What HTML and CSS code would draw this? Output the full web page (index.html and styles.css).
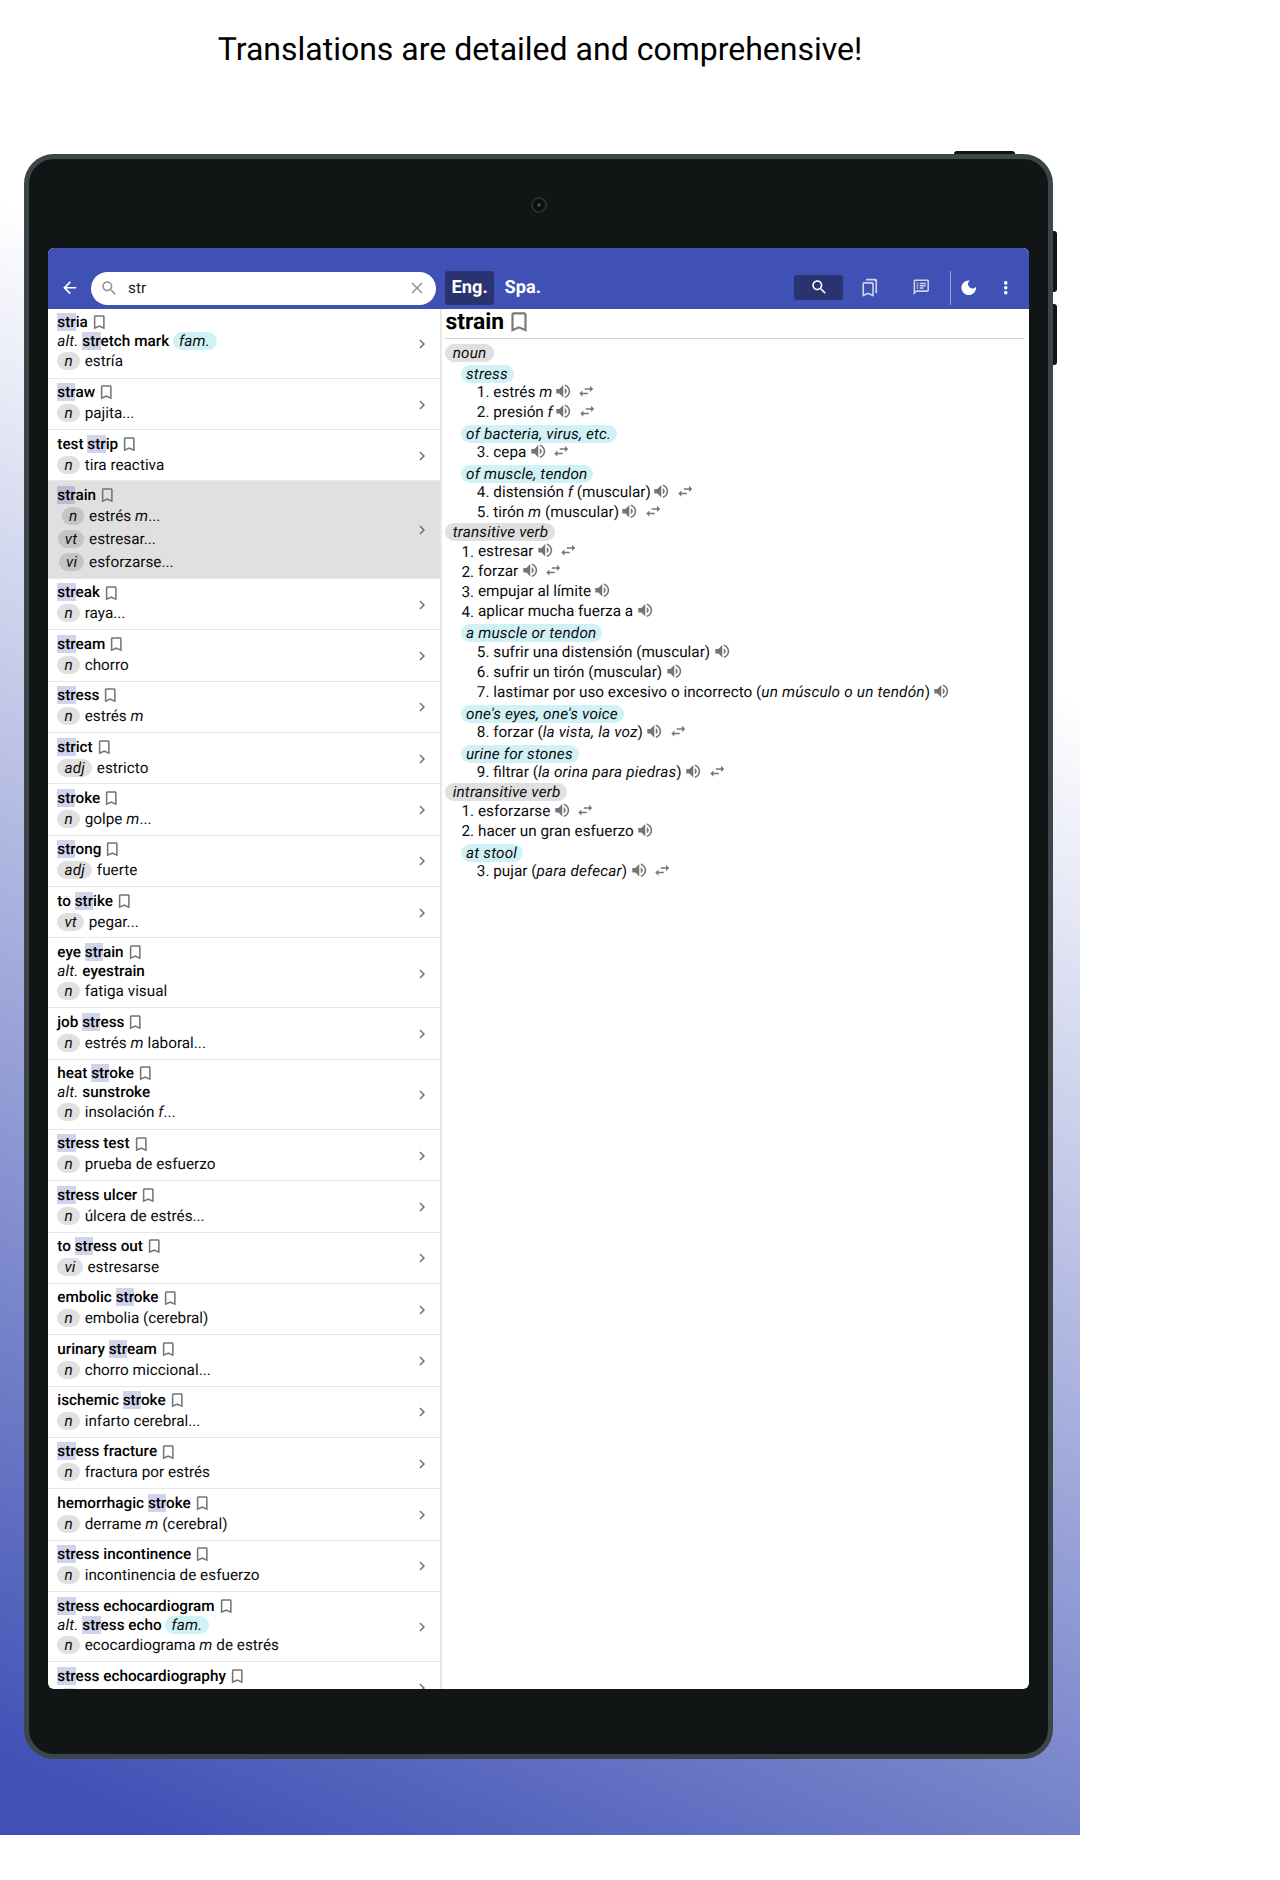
FILE: index.html
```html
<!DOCTYPE html>
<html lang="en">
<head>
<meta charset="utf-8">
<title>Medical dictionary</title>
<link rel="stylesheet" href="styles.css">
</head>
<body>
<svg class="sprite" aria-hidden="true">
  <symbol id="bm" viewBox="0 0 24 24"><path d="M17 3H7c-1.1 0-2 .9-2 2v16l7-3 7 3V5c0-1.1-.9-2-2-2zm0 15l-5-2.18L7 18V5h10v13z"/></symbol>
  <symbol id="go" viewBox="0 0 24 24"><path d="M10 6L8.59 7.41 13.17 12l-4.58 4.59L10 18l6-6z"/></symbol>
  <symbol id="vol" viewBox="0 0 24 24"><path d="M3 9v6h4l5 5V4L7 9H3zm13.5 3c0-1.77-1.02-3.29-2.5-4.03v8.05c1.48-.73 2.5-2.25 2.5-4.02zM14 3.23v2.06c2.89.86 5 3.54 5 6.71s-2.11 5.85-5 6.71v2.06c4.01-.91 7-4.49 7-8.77s-2.99-7.86-7-8.77z"/></symbol>
  <symbol id="swap" viewBox="0 0 24 24"><path d="M6.99 11L3 15l3.99 4v-3H14v-2H6.99v-3zM21 9l-3.99-4v3H10v2h7.01v3L21 9z"/></symbol>
  <symbol id="search" viewBox="0 0 24 24"><path d="M15.5 14h-.79l-.28-.27C15.41 12.59 16 11.11 16 9.5 16 5.91 13.09 3 9.5 3S3 5.91 3 9.5 5.91 16 9.5 16c1.61 0 3.09-.59 4.23-1.57l.27.28v.79l5 4.99L20.49 19l-4.99-5zm-6 0C7.01 14 5 11.99 5 9.5S7.01 5 9.5 5 14 7.01 14 9.5 11.99 14 9.5 14z"/></symbol>
</svg>
<main class="stage">
  <h1 class="headline">Translations are detailed and comprehensive!</h1>
  <div class="tablet">
    <i class="key key-top"></i><i class="key key-up"></i><i class="key key-down"></i>
    <i class="camera"></i>
    <div class="screen">
      <header class="bar">
        <svg class="back" viewBox="0 0 24 24"><path d="M20 11H7.83l5.59-5.59L12 4l-8 8 8 8 1.41-1.41L7.83 13H20v-2z"/></svg>
        <div class="field">
          <svg class="lens"><use href="#search"/></svg>
          <span class="query">str</span>
          <svg class="clear" viewBox="0 0 12 12"><path d="M1 1l10 10M11 1L1 11"/></svg>
        </div>
        <div class="langs"><b class="lang on">Eng.</b><b class="lang">Spa.</b></div>
        <nav class="tabs">
          <span class="tab on"><svg><use href="#search"/></svg></span>
          <span class="tab"><svg viewBox="0 0 24 24"><path d="M15 7v12.97l-4.21-1.81-.79-.34-.79.34L5 19.97V7h10m4-6H8.99C7.89 1 7 1.9 7 3h10c1.1 0 2 .9 2 2v13l2 1V3c0-1.1-.9-2-2-2zm-4 4H5c-1.1 0-2 .9-2 2v16l7-3 7 3V7c0-1.1-.9-2-2-2z"/></svg></span>
          <span class="tab notes"><svg viewBox="0 0 24 24"><path d="M20 2H4c-1.1 0-2 .9-2 2v18l4-4h14c1.1 0 2-.9 2-2V4c0-1.1-.9-2-2-2zm0 14H5.17L4 17.17V4h16v12zM6 12h2v2H6zm0-3h2v2H6zm0-3h2v2H6zm4 6h5v2h-5zm0-3h8v2h-8zm0-3h8v2h-8z"/></svg></span>
        </nav>
        <div class="tools">
          <svg viewBox="0 0 24 24"><path d="M12 3c-4.97 0-9 4.03-9 9s4.03 9 9 9 9-4.03 9-9c0-.46-.04-.92-.1-1.36-.98 1.37-2.58 2.26-4.4 2.26-2.98 0-5.4-2.42-5.4-5.4 0-1.81.89-3.42 2.26-4.4C12.92 3.04 12.46 3 12 3z"/></svg>
          <svg viewBox="0 0 24 24"><circle cx="12" cy="6" r="2.2"/><circle cx="12" cy="12" r="2.2"/><circle cx="12" cy="18" r="2.2"/></svg>
        </div>
      </header>
      <div class="panes">
        <section class="list">
          <article class="row tall"><div><h3><mark>str</mark>ia<svg><use href="#bm"/></svg></h3><p class="alt"><em>alt.</em> <b><mark>str</mark>etch mark</b> <em class="ctx">fam.</em></p><p><em class="pos">n</em>estría</p></div><svg class="go"><use href="#go"/></svg></article>
          <article class="row"><div><h3><mark>str</mark>aw<svg><use href="#bm"/></svg></h3><p><em class="pos">n</em>pajita...</p></div><svg class="go"><use href="#go"/></svg></article>
          <article class="row"><div><h3>test <mark>str</mark>ip<svg><use href="#bm"/></svg></h3><p><em class="pos">n</em>tira reactiva</p></div><svg class="go"><use href="#go"/></svg></article>
          <article class="row picked"><div><h3><mark>str</mark>ain<svg><use href="#bm"/></svg></h3><p><span><em class="pos">n</em></span>estrés <em>m</em>...</p><p><span><em class="pos">vt</em></span>estresar...</p><p><span><em class="pos">vi</em></span>esforzarse...</p></div><svg class="go"><use href="#go"/></svg></article>
          <article class="row"><div><h3><mark>str</mark>eak<svg><use href="#bm"/></svg></h3><p><em class="pos">n</em>raya...</p></div><svg class="go"><use href="#go"/></svg></article>
          <article class="row"><div><h3><mark>str</mark>eam<svg><use href="#bm"/></svg></h3><p><em class="pos">n</em>chorro</p></div><svg class="go"><use href="#go"/></svg></article>
          <article class="row"><div><h3><mark>str</mark>ess<svg><use href="#bm"/></svg></h3><p><em class="pos">n</em>estrés <em>m</em></p></div><svg class="go"><use href="#go"/></svg></article>
          <article class="row"><div><h3><mark>str</mark>ict<svg><use href="#bm"/></svg></h3><p><em class="pos">adj</em>estricto</p></div><svg class="go"><use href="#go"/></svg></article>
          <article class="row"><div><h3><mark>str</mark>oke<svg><use href="#bm"/></svg></h3><p><em class="pos">n</em>golpe <em>m</em>...</p></div><svg class="go"><use href="#go"/></svg></article>
          <article class="row"><div><h3><mark>str</mark>ong<svg><use href="#bm"/></svg></h3><p><em class="pos">adj</em>fuerte</p></div><svg class="go"><use href="#go"/></svg></article>
          <article class="row"><div><h3>to <mark>str</mark>ike<svg><use href="#bm"/></svg></h3><p><em class="pos">vt</em>pegar...</p></div><svg class="go"><use href="#go"/></svg></article>
          <article class="row tall"><div><h3>eye <mark>str</mark>ain<svg><use href="#bm"/></svg></h3><p class="alt"><em>alt.</em> <b>eyestrain</b></p><p><em class="pos">n</em>fatiga visual</p></div><svg class="go"><use href="#go"/></svg></article>
          <article class="row"><div><h3>job <mark>str</mark>ess<svg><use href="#bm"/></svg></h3><p><em class="pos">n</em>estrés <em>m</em> laboral...</p></div><svg class="go"><use href="#go"/></svg></article>
          <article class="row tall"><div><h3>heat <mark>str</mark>oke<svg><use href="#bm"/></svg></h3><p class="alt"><em>alt.</em> <b>sunstroke</b></p><p><em class="pos">n</em>insolación <em>f</em>...</p></div><svg class="go"><use href="#go"/></svg></article>
          <article class="row"><div><h3><mark>str</mark>ess test<svg><use href="#bm"/></svg></h3><p><em class="pos">n</em>prueba de esfuerzo</p></div><svg class="go"><use href="#go"/></svg></article>
          <article class="row"><div><h3><mark>str</mark>ess ulcer<svg><use href="#bm"/></svg></h3><p><em class="pos">n</em>úlcera de estrés...</p></div><svg class="go"><use href="#go"/></svg></article>
          <article class="row"><div><h3>to <mark>str</mark>ess out<svg><use href="#bm"/></svg></h3><p><em class="pos">vi</em>estresarse</p></div><svg class="go"><use href="#go"/></svg></article>
          <article class="row"><div><h3>embolic <mark>str</mark>oke<svg><use href="#bm"/></svg></h3><p><em class="pos">n</em>embolia (cerebral)</p></div><svg class="go"><use href="#go"/></svg></article>
          <article class="row"><div><h3>urinary <mark>str</mark>eam<svg><use href="#bm"/></svg></h3><p><em class="pos">n</em>chorro miccional...</p></div><svg class="go"><use href="#go"/></svg></article>
          <article class="row"><div><h3>ischemic <mark>str</mark>oke<svg><use href="#bm"/></svg></h3><p><em class="pos">n</em>infarto cerebral...</p></div><svg class="go"><use href="#go"/></svg></article>
          <article class="row"><div><h3><mark>str</mark>ess fracture<svg><use href="#bm"/></svg></h3><p><em class="pos">n</em>fractura por estrés</p></div><svg class="go"><use href="#go"/></svg></article>
          <article class="row"><div><h3>hemorrhagic <mark>str</mark>oke<svg><use href="#bm"/></svg></h3><p><em class="pos">n</em>derrame <em>m</em> (cerebral)</p></div><svg class="go"><use href="#go"/></svg></article>
          <article class="row"><div><h3><mark>str</mark>ess incontinence<svg><use href="#bm"/></svg></h3><p><em class="pos">n</em>incontinencia de esfuerzo</p></div><svg class="go"><use href="#go"/></svg></article>
          <article class="row tall"><div><h3><mark>str</mark>ess echocardiogram<svg><use href="#bm"/></svg></h3><p class="alt"><em>alt.</em> <b><mark>str</mark>ess echo</b> <em class="ctx">fam.</em></p><p><em class="pos">n</em>ecocardiograma <em>m</em> de estrés</p></div><svg class="go"><use href="#go"/></svg></article>
          <article class="row"><div><h3><mark>str</mark>ess echocardiography<svg><use href="#bm"/></svg></h3><p><em class="pos">n</em></p></div><svg class="go"><use href="#go"/></svg></article>
        </section>
        <section class="entry">
          <h2>strain<svg><use href="#bm"/></svg></h2>
          <div class="part"><em class="pos">noun</em></div>
          <div class="sense"><em class="ctx">stress</em></div>
          <div class="item sub"><i>1.</i>estrés <em>m</em><svg><use href="#vol"/></svg><svg class="sw"><use href="#swap"/></svg></div>
          <div class="item sub"><i>2.</i>presión <em>f</em><svg><use href="#vol"/></svg><svg class="sw"><use href="#swap"/></svg></div>
          <div class="sense"><em class="ctx">of bacteria, virus, etc.</em></div>
          <div class="item sub"><i>3.</i>cepa<svg><use href="#vol"/></svg><svg class="sw"><use href="#swap"/></svg></div>
          <div class="sense"><em class="ctx">of muscle, tendon</em></div>
          <div class="item sub"><i>4.</i>distensión <em>f</em> (muscular)<svg><use href="#vol"/></svg><svg class="sw"><use href="#swap"/></svg></div>
          <div class="item sub"><i>5.</i>tirón <em>m</em> (muscular)<svg><use href="#vol"/></svg><svg class="sw"><use href="#swap"/></svg></div>
          <div class="part"><em class="pos">transitive verb</em></div>
          <div class="item"><i>1.</i>estresar<svg><use href="#vol"/></svg><svg class="sw"><use href="#swap"/></svg></div>
          <div class="item"><i>2.</i>forzar<svg><use href="#vol"/></svg><svg class="sw"><use href="#swap"/></svg></div>
          <div class="item"><i>3.</i>empujar al límite<svg><use href="#vol"/></svg></div>
          <div class="item"><i>4.</i>aplicar mucha fuerza a<svg><use href="#vol"/></svg></div>
          <div class="sense"><em class="ctx">a muscle or tendon</em></div>
          <div class="item sub"><i>5.</i>sufrir una distensión (muscular)<svg><use href="#vol"/></svg></div>
          <div class="item sub"><i>6.</i>sufrir un tirón (muscular)<svg><use href="#vol"/></svg></div>
          <div class="item sub"><i>7.</i>lastimar por uso excesivo o incorrecto (<em>un músculo o un tendón</em>)<svg class="gap"><use href="#vol"/></svg></div>
          <div class="sense"><em class="ctx">one's eyes, one's voice</em></div>
          <div class="item sub"><i>8.</i>forzar (<em>la vista, la voz</em>)<svg class="gap"><use href="#vol"/></svg><svg class="sw"><use href="#swap"/></svg></div>
          <div class="sense"><em class="ctx">urine for stones</em></div>
          <div class="item sub"><i>9.</i>filtrar (<em>la orina para piedras</em>)<svg class="gap"><use href="#vol"/></svg><svg class="sw"><use href="#swap"/></svg></div>
          <div class="part"><em class="pos">intransitive verb</em></div>
          <div class="item"><i>1.</i>esforzarse<svg><use href="#vol"/></svg><svg class="sw"><use href="#swap"/></svg></div>
          <div class="item"><i>2.</i>hacer un gran esfuerzo<svg><use href="#vol"/></svg></div>
          <div class="sense"><em class="ctx">at stool</em></div>
          <div class="item sub"><i>3.</i>pujar (<em>para defecar</em>)<svg class="gap"><use href="#vol"/></svg><svg class="sw"><use href="#swap"/></svg></div>
        </section>
      </div>
    </div>
  </div>
</main>
</body>
</html>
```
FILE: styles.css
```css
* { box-sizing: border-box; margin: 0; padding: 0; }
body { background: #fff; font-family: Roboto, sans-serif; font-size: 15.3px; color: #0c0c0c; text-rendering: geometricPrecision; }
.sprite { display: none; }
svg { fill: currentColor; }
em { letter-spacing: .2px; }

.stage {
  width: 1080px;
  height: 1834.5px;
  padding-top: 30px;
  background: linear-gradient(25deg, #3f51b5 3%, #fff 70%);
}
.headline { height: 124px; font-size: 32px; font-weight: 400; line-height: 38px; text-align: center; color: #000; }

/* tablet body */
.tablet {
  position: relative;
  width: 1029px;
  height: 1604.5px;
  margin-left: 24.4px;
  padding: 89px 0 0 18.6px;
  border: 5px solid #3c4548;
  border-radius: 30px;
  background: #111515;
}
.key { position: absolute; background: #111515; }
.key-top { top: -8px; left: 925px; width: 61px; height: 3px; border-radius: 3px 3px 0 0; }
.key-up, .key-down { right: -9px; width: 4px; height: 61px; border-radius: 0 3px 3px 0; }
.key-up { top: 72px; }
.key-down { top: 145px; }
.camera {
  position: absolute;
  top: 38px;
  left: 502px;
  width: 16px;
  height: 16px;
  border: 2.5px solid #282c2d;
  border-radius: 50%;
  background: radial-gradient(circle, #4a5355 1px, #0c0f0f 2.2px);
}
.screen { display: flex; flex-direction: column; width: 981px; height: 1441px; border-radius: 6px; overflow: hidden; background: #fff; }

/* top bar */
.bar { display: flex; flex: none; align-items: center; height: 60.6px; padding: 19.5px 0 0 12px; background: #3f51b5; color: #fff; }
.back { width: 19.5px; height: 19.5px; margin-right: 11.5px; }
.field { display: flex; align-items: center; width: 345px; height: 33px; padding: 0 13px 0 9px; border-radius: 17px; background: #fff; }
.lens { width: 18.5px; height: 18.5px; color: #949494; }
.query { flex: 1; padding-left: 9.5px; color: #222; }
.clear { width: 12px; height: 12px; fill: none; stroke: #858585; stroke-width: 1.2; }
.langs { display: flex; margin-left: 9.3px; }
.lang { height: 33.5px; padding: 0 6.3px; border-radius: 3px; font-size: 18.2px; line-height: 34px; }
.lang.on { width: 49px; margin-right: 4px; background: #28336f; }
.tabs { display: flex; margin: 0 0 1.6px auto; }
.tab { display: grid; place-items: center; width: 49px; height: 25px; margin-right: 2px; border-radius: 3px; color: rgba(255, 255, 255, .75); }
.tab.on { background: #28336f; color: #fff; }
.tab svg { width: 19.5px; height: 19.5px; }
.tab.on svg, .tab.notes svg { width: 18.5px; height: 18.5px; }
.tools { display: flex; align-items: center; gap: 17px; width: 79px; height: 33.5px; margin-left: 2.5px; padding-left: 8.5px; border-left: 1px solid rgba(255, 255, 255, .45); }
.tools svg { width: 19.5px; height: 19.5px; }

.panes { display: grid; grid-template-columns: 394px 1fr; flex: 1; min-height: 0; }

/* result list */
.list { border-right: 2px solid #e8e8e8; overflow: hidden; }
.row { display: flex; flex: none; align-items: center; height: 51.35px; padding-left: 9.3px; border-bottom: 1.4px solid #e8e8e8; }
.row.tall { height: 70.1px; }
.row.picked { height: 97.5px; background: #e0e0e0; }
.row > div { flex: 1; align-self: flex-start; padding-top: 3.6px; white-space: nowrap; }
.row h3 { height: 20px; font-size: inherit; font-weight: 500; line-height: 20px; color: #000; }
.row h3 svg { width: 18.5px; height: 18.5px; margin-left: 2px; vertical-align: -4.6px; color: #747474; }
.row p { height: 22px; line-height: 22px; }
.row .alt { height: 19px; line-height: 19px; }
.row.tall p:last-child { height: 20px; line-height: 20px; }
.row.picked p { height: 23px; line-height: 23px; }
.row.picked p span { display: inline-block; width: 31.8px; text-align: right; }
.row b { font-weight: 500; color: #000; }
.row .go { width: 18px; height: 18px; margin: 1.4px 8.6px 0 0; color: #707070; }
mark { background: rgba(63, 81, 181, .25); color: inherit; }
.pos { margin-right: 4.8px; padding: 0 7px 0 7.2px; border-radius: 9px; background: #e0e0e0; }
.picked .pos { background: #c4c4c4; }
.ctx { padding: 0 6px 0 5px; border-radius: 9px; background: #d0f2f7; }
.list .ctx { padding: 0 7px 0 6px; }

/* entry */
.entry { padding: 0 4.5px 0 3.5px; white-space: nowrap; }
.entry h2 { height: 30px; margin-bottom: 4px; border-bottom: 1px solid #d4d4d4; font-size: 22.9px; font-weight: 700; line-height: 26.6px; color: #000; }
.entry h2 svg { width: 26px; height: 26px; margin-left: 2px; vertical-align: -6px; color: #7a7a7a; }
.part { height: 19.1px; line-height: 20px; }
.sense { height: 20.2px; padding-left: 15.5px; line-height: 24px; }
.item { height: 20px; padding-left: 16px; line-height: 20px; }
.item.sub { padding-left: 31.3px; }
.item i { display: inline-block; width: 16.5px; font-style: normal; }
.item svg { width: 18.5px; height: 18.5px; margin-left: 2.4px; vertical-align: -3.3px; color: #757575; }
.item em + svg { margin-left: 1.2px; }
.item em + svg.gap { margin-left: 2.4px; }
.item svg + .sw { margin-left: 5px; }
```
